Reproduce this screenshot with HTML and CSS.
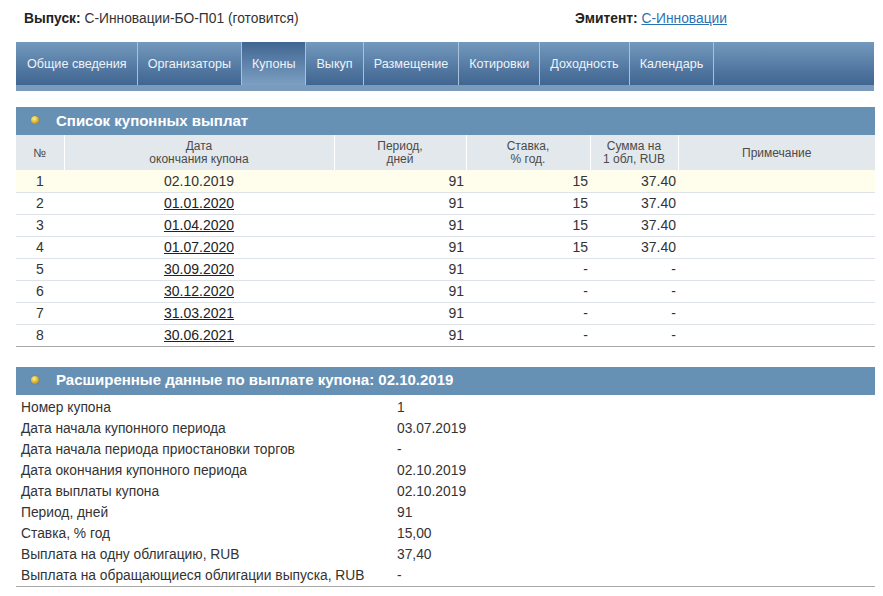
FILE: index.html
```html
<!DOCTYPE html>
<html lang="ru">
<head>
<meta charset="utf-8">
<title>Купоны</title>
<link rel="stylesheet" href="styles.css">
</head>
<body>
<div class="page">
  <div class="info">
    <div><b>Выпуск:</b> С-Инновации-БО-П01 (готовится)</div>
    <div><b>Эмитент:</b> <a href="#">С-Инновации</a></div>
  </div>

  <nav class="tabs">
    <a class="tab" href="#">Общие сведения</a>
    <a class="tab" href="#">Организаторы</a>
    <a class="tab active" href="#">Купоны</a>
    <a class="tab" href="#">Выкуп</a>
    <a class="tab" href="#">Размещение</a>
    <a class="tab" href="#">Котировки</a>
    <a class="tab" href="#">Доходность</a>
    <a class="tab" href="#">Календарь</a>
  </nav>

  <section class="block">
    <h2 class="block-title"><span class="ball"></span>Список купонных выплат</h2>
    <table class="coupons">
      <colgroup>
        <col class="c-num"><col class="c-date"><col class="c-per"><col class="c-rate"><col class="c-sum"><col>
      </colgroup>
      <thead>
        <tr>
          <th>№</th>
          <th>Дата<br>окончания купона</th>
          <th>Период,<br>дней</th>
          <th>Ставка,<br>% год.</th>
          <th>Сумма на<br>1 обл, RUB</th>
          <th>Примечание</th>
        </tr>
      </thead>
      <tbody>
        <tr class="current"><td class="ctr">1</td><td class="ctr">02.10.2019</td><td class="num">91</td><td class="num">15</td><td class="num">37.40</td><td></td></tr>
        <tr><td class="ctr">2</td><td class="ctr"><a href="#">01.01.2020</a></td><td class="num">91</td><td class="num">15</td><td class="num">37.40</td><td></td></tr>
        <tr><td class="ctr">3</td><td class="ctr"><a href="#">01.04.2020</a></td><td class="num">91</td><td class="num">15</td><td class="num">37.40</td><td></td></tr>
        <tr><td class="ctr">4</td><td class="ctr"><a href="#">01.07.2020</a></td><td class="num">91</td><td class="num">15</td><td class="num">37.40</td><td></td></tr>
        <tr><td class="ctr">5</td><td class="ctr"><a href="#">30.09.2020</a></td><td class="num">91</td><td class="num">-</td><td class="num">-</td><td></td></tr>
        <tr><td class="ctr">6</td><td class="ctr"><a href="#">30.12.2020</a></td><td class="num">91</td><td class="num">-</td><td class="num">-</td><td></td></tr>
        <tr><td class="ctr">7</td><td class="ctr"><a href="#">31.03.2021</a></td><td class="num">91</td><td class="num">-</td><td class="num">-</td><td></td></tr>
        <tr><td class="ctr">8</td><td class="ctr"><a href="#">30.06.2021</a></td><td class="num">91</td><td class="num">-</td><td class="num">-</td><td></td></tr>
      </tbody>
    </table>
  </section>

  <section class="block second">
    <h2 class="block-title"><span class="ball"></span>Расширенные данные по выплате купона: 02.10.2019</h2>
    <dl class="details">
      <dt>Номер купона</dt><dd>1</dd>
      <dt>Дата начала купонного периода</dt><dd>03.07.2019</dd>
      <dt>Дата начала периода приостановки торгов</dt><dd>-</dd>
      <dt>Дата окончания купонного периода</dt><dd>02.10.2019</dd>
      <dt>Дата выплаты купона</dt><dd>02.10.2019</dd>
      <dt>Период, дней</dt><dd>91</dd>
      <dt>Ставка, % год</dt><dd>15,00</dd>
      <dt>Выплата на одну облигацию, RUB</dt><dd>37,40</dd>
      <dt>Выплата на обращающиеся облигации выпуска, RUB</dt><dd>-</dd>
    </dl>
  </section>
</div>
</body>
</html>
```

FILE: styles.css
```css
* { box-sizing: border-box; }

html, body {
  margin: 0;
  padding: 0;
  background: #ffffff;
}

body {
  font-family: "Liberation Sans", Arial, sans-serif;
  font-size: 14px;
  color: #333333;
}

.page {
  width: 859px;
  margin-left: 16px;
}

.info {
  display: grid;
  grid-template-columns: 551px 1fr;
  padding: 10px 0 0 8px;
  height: 42px;
  line-height: 18px;
  font-size: 13.8px;
  color: #333;
}

.info b { color: #222; }

.info a { color: #2a72b5; }

.tabs {
  display: flex;
  height: 49px;
  border-bottom: 6px solid #7b9bbd;
  background: linear-gradient(#7399bd, #3f6591);
  margin-right: 1px;
}

.tab {
  display: flex;
  align-items: center;
  padding: 0 10px 0 10px;
  height: 43px;
  color: #eef3f8;
  text-decoration: none;
  font-size: 12.6px;
  border-right: 1px solid #a9c2da;
  background: linear-gradient(#7399bd, #3f6591);
}

.tab:first-child { padding-left: 11px; }

.tab.active {
  background: linear-gradient(#3f6591, #7d9fc2);
}

.block { margin-top: 16px; }
.block.second { margin-top: 20px; }

.block-title {
  margin: 0;
  height: 28px;
  display: flex;
  align-items: center;
  background: #6790b5;
  color: #ffffff;
  font-size: 15px;
  font-weight: bold;
  padding: 0 0 2px 15px;
}

.ball {
  width: 8px;
  height: 8px;
  border-radius: 50%;
  background: radial-gradient(circle at 40% 35%, #fff2a0 0, #e3c040 40%, #8f7420 100%);
  margin-right: 17px;
  box-shadow: 0 0 1px rgba(60, 50, 10, 0.4);
}

.coupons {
  width: 100%;
  border-collapse: collapse;
  table-layout: fixed;
  font-size: 14px;
}

.c-num { width: 48px; }
.c-date { width: 270px; }
.c-per { width: 132px; }
.c-rate { width: 124px; }
.c-sum { width: 88px; }

.coupons th {
  background: #e3e8ec;
  font-weight: normal;
  font-size: 12px;
  line-height: 13px;
  color: #4a4a4a;
  height: 35px;
  padding: 1px 2px 0;
  border-left: 1px solid #ffffff;
  text-align: center;
  vertical-align: middle;
}

.coupons th:first-child { border-left: none; }

.coupons td {
  height: 22px;
  padding: 0 2px;
  border-bottom: 1px solid #dde3e8;
  line-height: 20px;
  color: #333;
}

.coupons tbody tr:last-child td { border-bottom: 1px solid #a8a8a8; }

.coupons tr.current td { background: #fffdec; }

.coupons td.ctr { text-align: center; }
.coupons td.num { text-align: right; }

.coupons a { color: #222; }

.details {
  display: grid;
  grid-template-columns: 376px 1fr;
  margin: 2px 0 0;
  padding-left: 5px;
  border-bottom: 1px solid #a8a8a8;
  line-height: 21px;
  font-size: 13.8px;
  color: #333;
}

.details dt, .details dd { margin: 0; }
```
